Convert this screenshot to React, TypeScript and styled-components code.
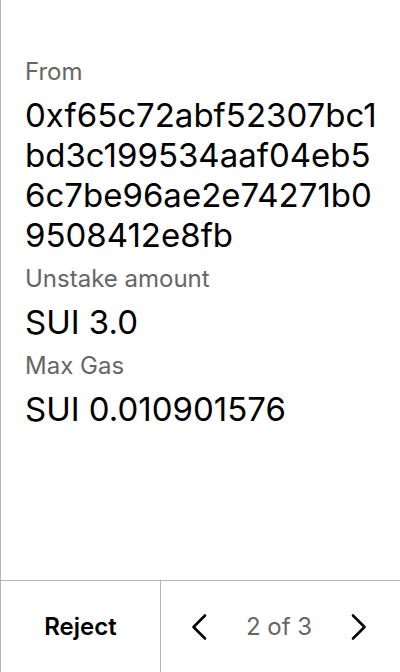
import React from 'react';
import styled, { createGlobalStyle } from 'styled-components';

const GlobalStyle = createGlobalStyle`
  html, body {
    margin: 0;
    padding: 0;
    background: #fff;
  }
  #root {
    height: 672px;
  }
`;

const Screen = styled.div`
  height: 672px;
  display: flex;
  flex-direction: column;
  border-left: 1px solid #b5b5b5;
  font-family: Inter, "Noto Sans", sans-serif;
  color: #000;
  box-sizing: border-box;
`;

const Content = styled.div`
  flex: 1;
  display: flex;
  flex-direction: column;
  gap: 9px;
  padding: 57px 20px 0 24px;
`;

const Label = styled.div`
  font-size: 24px;
  line-height: 29px;
  color: #666;
`;

const Value = styled.div`
  font-size: 33px;
  line-height: 40px;
  word-break: break-all;
`;

const Footer = styled.div`
  height: 92px;
  display: flex;
  border-top: 1px solid #b5b5b5;
  box-sizing: border-box;
`;

const RejectButton = styled.button`
  width: 160px;
  border: none;
  border-right: 1px solid #b5b5b5;
  background: none;
  font-family: inherit;
  font-size: 24px;
  font-weight: 600;
  color: #000;
  padding: 0;
`;

const Pager = styled.div`
  flex: 1;
  display: flex;
  align-items: center;
  justify-content: space-between;
  padding: 0 31px 0 28px;
`;

const NavButton = styled.button`
  border: none;
  background: none;
  padding: 0;
  display: flex;
  align-items: center;
`;

const PageText = styled.span`
  font-size: 24px;
  color: #666;
`;

const Chevron = ({ dir }: { dir: 'left' | 'right' }) => (
  <svg width="20" height="28" viewBox="0 0 20 28" fill="none">
    <path
      d={dir === 'left' ? 'M16 2.5 L4.5 14 L16 25.5' : 'M4 2.5 L15.5 14 L4 25.5'}
      stroke="#000"
      strokeWidth="2.6"
      strokeLinecap="round"
      strokeLinejoin="round"
    />
  </svg>
);

const fields = [
  { label: 'From', value: '0xf65c72abf52307bc1bd3c199534aaf04eb56c7be96ae2e74271b09508412e8fb' },
  { label: 'Unstake amount', value: 'SUI 3.0' },
  { label: 'Max Gas', value: 'SUI 0.010901576' },
];

export default function App() {
  return (
    <>
      <GlobalStyle />
      <Screen>
        <Content>
          {fields.map((item, index) => (
            <React.Fragment key={`field-${index}`}>
              <Label>{item.label}</Label>
              <Value>{item.value}</Value>
            </React.Fragment>
          ))}
        </Content>
        <Footer>
          <RejectButton>Reject</RejectButton>
          <Pager>
            <NavButton><Chevron dir="left" /></NavButton>
            <PageText>2 of 3</PageText>
            <NavButton><Chevron dir="right" /></NavButton>
          </Pager>
        </Footer>
      </Screen>
    </>
  );
}
